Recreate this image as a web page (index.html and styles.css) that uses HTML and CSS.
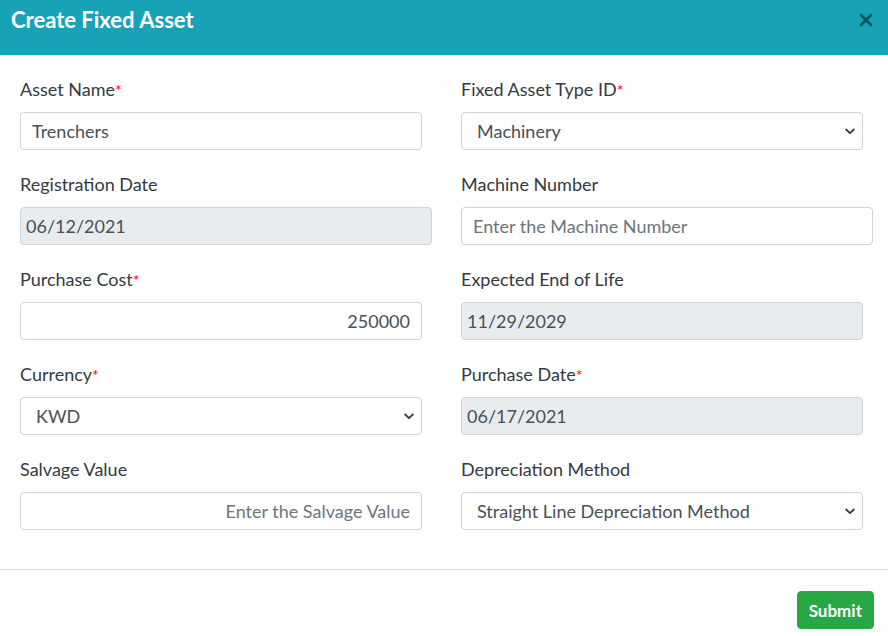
FILE: index.html
```html
<!DOCTYPE html>
<html lang="en">
<head>
<meta charset="utf-8">
<title>Create Fixed Asset</title>
<link rel="stylesheet" href="styles.css">
</head>
<body>
<div class="modal">
  <div class="modal-header">
    <h5 class="modal-title">Create Fixed Asset</h5>
    <button class="close" type="button" aria-label="Close">
      <svg width="14" height="14" viewBox="0 0 14 14"><path d="M2 2L12 12M12 2L2 12" stroke="currentColor" stroke-width="2.6" stroke-linecap="round"/></svg>
    </button>
  </div>
  <div class="modal-body">
    <div class="form-grid">
      <div class="field">
        <label class="label">Asset Name<span class="req">*</span></label>
        <input class="control narrow" type="text" value="Trenchers">
      </div>
      <div class="field">
        <label class="label">Fixed Asset Type ID<span class="req">*</span></label>
        <div class="select-wrap narrow">
          <select class="control select"><option>Machinery</option></select>
          <svg class="chev" width="10" height="7" viewBox="0 0 10 7"><path d="M1.2 1.5L5 5.2L8.8 1.5" fill="none" stroke="#343a40" stroke-width="1.8" stroke-linecap="round" stroke-linejoin="round"/></svg>
        </div>
      </div>
      <div class="field">
        <label class="label">Registration Date</label>
        <input class="control date" type="text" value="06/12/2021" disabled>
      </div>
      <div class="field">
        <label class="label">Machine Number</label>
        <input class="control" type="text" placeholder="Enter the Machine Number">
      </div>
      <div class="field">
        <label class="label">Purchase Cost<span class="req">*</span></label>
        <input class="control narrow right" type="text" value="250000">
      </div>
      <div class="field">
        <label class="label">Expected End of Life</label>
        <input class="control narrow date" type="text" value="11/29/2029" disabled>
      </div>
      <div class="field">
        <label class="label">Currency<span class="req">*</span></label>
        <div class="select-wrap narrow">
          <select class="control select"><option>KWD</option></select>
          <svg class="chev" width="10" height="7" viewBox="0 0 10 7"><path d="M1.2 1.5L5 5.2L8.8 1.5" fill="none" stroke="#343a40" stroke-width="1.8" stroke-linecap="round" stroke-linejoin="round"/></svg>
        </div>
      </div>
      <div class="field">
        <label class="label">Purchase Date<span class="req">*</span></label>
        <input class="control narrow date" type="text" value="06/17/2021" disabled>
      </div>
      <div class="field">
        <label class="label">Salvage Value</label>
        <input class="control narrow right" type="text" placeholder="Enter the Salvage Value">
      </div>
      <div class="field">
        <label class="label">Depreciation Method</label>
        <div class="select-wrap narrow">
          <select class="control select"><option>Straight Line Depreciation Method</option></select>
          <svg class="chev" width="10" height="7" viewBox="0 0 10 7"><path d="M1.2 1.5L5 5.2L8.8 1.5" fill="none" stroke="#343a40" stroke-width="1.8" stroke-linecap="round" stroke-linejoin="round"/></svg>
        </div>
      </div>
    </div>
  </div>
  <div class="modal-footer">
    <button class="btn-submit" type="button">Submit</button>
  </div>
</div>
</body>
</html>
```

FILE: styles.css
```css
* { box-sizing: border-box; }
html, body { margin: 0; padding: 0; background: #fff; }
body {
  font-family: Lato, "Open Sans", "Liberation Sans", sans-serif;
  color: #212529;
  width: 888px;
  height: 636px;
  overflow: hidden;
}
.modal { width: 888px; }
.modal-header {
  height: 55px;
  background: #17a2b8;
  display: flex;
  justify-content: space-between;
  align-items: flex-start;
  padding: 6px 15px 0 11px;
}
.modal-title {
  margin: 0;
  font-size: 22px;
  font-weight: 700;
  line-height: 28px;
  color: #fff;
}
.close {
  border: 0;
  background: transparent;
  padding: 0;
  margin-top: 7px;
  color: rgba(0, 0, 0, 0.5);
  display: flex;
  cursor: pointer;
}
.modal-body {
  padding: 22px 15px 39px 20px;
}
.form-grid {
  display: grid;
  grid-template-columns: 412px 412px;
  grid-auto-rows: 73px;
  column-gap: 29px;
  row-gap: 22px;
}
.field { display: flex; flex-direction: column; height: 73px; }
.label {
  display: block;
  height: 24px;
  font-size: 18px;
  line-height: 24px;
  margin-bottom: 11px;
  color: #343a40;
  white-space: nowrap;
}
.req { color: #ff0000; font-size: 16px; line-height: 0; }
.control {
  display: block;
  width: 100%;
  height: 38px;
  flex: none;
  border: 1px solid #ced4da;
  border-radius: 4px;
  background: #fff;
  font-family: inherit;
  font-size: 18px;
  color: #495057;
  padding: 0 11px;
  margin: 0;
  outline: none;
}
.control::placeholder { color: #6c757d; opacity: 1; }
.narrow { width: 402px; }
.right { text-align: right; }
.date {
  background: #e9ecef;
  padding-left: 5px;
  color: #495057;
  -webkit-text-fill-color: #495057;
  opacity: 1;
}
.select-wrap { position: relative; height: 38px; flex: none; }
.select-wrap .control { width: 100%; }
.select {
  appearance: none;
  -webkit-appearance: none;
  padding-left: 15px;
  padding-right: 32px;
}
.chev {
  position: absolute;
  right: 8px;
  top: 16px;
  pointer-events: none;
}
.modal-footer {
  border-top: 1px solid #dee2e6;
  display: flex;
  justify-content: flex-end;
  padding: 21px 14px 0 0;
}
.btn-submit {
  height: 38px;
  padding: 0 11px;
  border: 1px solid #28a745;
  border-radius: 4px;
  background: #28a745;
  color: #fff;
  font-family: inherit;
  font-size: 17px;
  font-weight: 700;
}
```
